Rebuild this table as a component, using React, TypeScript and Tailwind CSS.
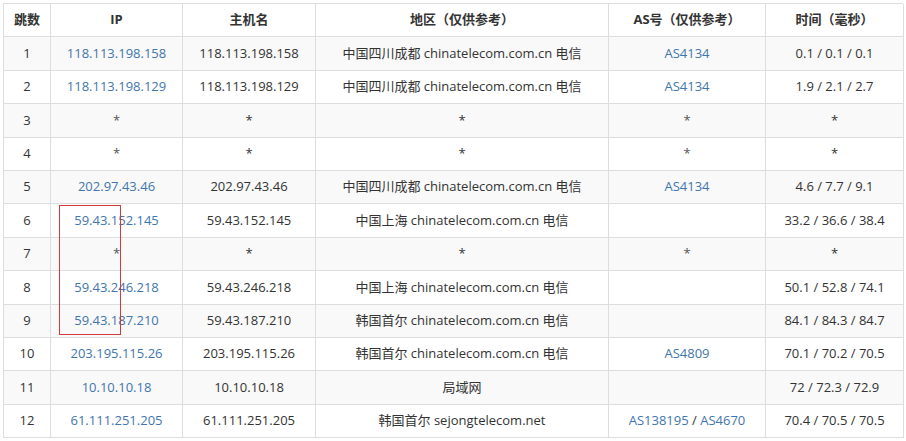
type Hop = {
  n: number;
  ip: string;
  host: string;
  region: string;
  as: string[];
  time: string;
};

const hops: Hop[] = [
  { n: 1, ip: "118.113.198.158", host: "118.113.198.158", region: "中国四川成都 chinatelecom.com.cn 电信", as: ["AS4134"], time: "0.1 / 0.1 / 0.1" },
  { n: 2, ip: "118.113.198.129", host: "118.113.198.129", region: "中国四川成都 chinatelecom.com.cn 电信", as: ["AS4134"], time: "1.9 / 2.1 / 2.7" },
  { n: 3, ip: "*", host: "*", region: "*", as: ["*"], time: "*" },
  { n: 4, ip: "*", host: "*", region: "*", as: ["*"], time: "*" },
  { n: 5, ip: "202.97.43.46", host: "202.97.43.46", region: "中国四川成都 chinatelecom.com.cn 电信", as: ["AS4134"], time: "4.6 / 7.7 / 9.1" },
  { n: 6, ip: "59.43.152.145", host: "59.43.152.145", region: "中国上海 chinatelecom.com.cn 电信", as: [], time: "33.2 / 36.6 / 38.4" },
  { n: 7, ip: "*", host: "*", region: "*", as: ["*"], time: "*" },
  { n: 8, ip: "59.43.246.218", host: "59.43.246.218", region: "中国上海 chinatelecom.com.cn 电信", as: [], time: "50.1 / 52.8 / 74.1" },
  { n: 9, ip: "59.43.187.210", host: "59.43.187.210", region: "韩国首尔 chinatelecom.com.cn 电信", as: [], time: "84.1 / 84.3 / 84.7" },
  { n: 10, ip: "203.195.115.26", host: "203.195.115.26", region: "韩国首尔 chinatelecom.com.cn 电信", as: ["AS4809"], time: "70.1 / 70.2 / 70.5" },
  { n: 11, ip: "10.10.10.18", host: "10.10.10.18", region: "局域网", as: [], time: "72 / 72.3 / 72.9" },
  { n: 12, ip: "61.111.251.205", host: "61.111.251.205", region: "韩国首尔 sejongtelecom.net", as: ["AS138195", "AS4670"], time: "70.4 / 70.5 / 70.5" },
];

const cols = "grid grid-cols-[47px_132px_133px_293px_157px_138px]";
const cell = "flex items-center justify-center border-r border-b border-[#dddddd] h-[33.4px] whitespace-nowrap";

function Link({ children }: { children: string }) {
  if (children === "*") return <span className="text-[#555]">*</span>;
  return <span className="text-[#3f76ad]">{children}</span>;
}

export default function App() {
  return (
    <div
      className="relative bg-white w-[906px] h-[441px] pt-[3px] pl-[3px] text-[13px] text-[#333]"
      style={{ fontFamily: '"Open Sans", "Noto Sans CJK SC", sans-serif' }}
    >
      <div className="w-[900px] border-t border-l border-[#dddddd]">
        {/* Header */}
        <div className={cols}>
          {["跳数", "IP", "主机名", "地区（仅供参考）", "AS号（仅供参考）", "时间（毫秒）"].map((h) => (
            <div key={h} className={`${cell} font-bold`}>
              {h}
            </div>
          ))}
        </div>

        {hops.map((h, i) => (
          <div key={h.n} className={`${cols} ${i % 2 === 0 ? "bg-[#f9f9f9]" : "bg-white"}`}>
            <div className={cell}>{h.n}</div>
            <div className={cell}>
              <Link>{h.ip}</Link>
            </div>
            <div className={cell}>{h.host}</div>
            <div className={cell}>{h.region}</div>
            <div className={cell}>
              <span>
                {h.as.map((a, k) => (
                  <span key={a}>
                    {k > 0 && " / "}
                    <Link>{a}</Link>
                  </span>
                ))}
              </span>
            </div>
            <div className={cell}>{h.time}</div>
          </div>
        ))}
      </div>

      {/* highlight box drawn over the IP column */}
      <div className="absolute left-[59px] top-[205px] w-[62px] h-[130px] border border-[#d33a3a]" />
    </div>
  );
}
